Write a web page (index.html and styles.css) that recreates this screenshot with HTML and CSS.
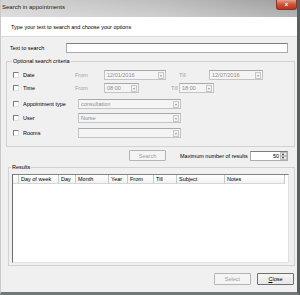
FILE: index.html
```html
<!doctype html>
<html>
<head>
<meta charset="utf-8">
<title>Search in appointments</title>
	<link rel="stylesheet" href="styles.css">
</head>

<body>
	<div class="window">
		<div class="titlebar">
			<span class="title">Search in appointments</span>
			<span class="close-x">x</span>
		</div>

		<div class="header">
			<span>Type your text to search and choose your options</span>
		</div>

		<div class="search-row">
			<span class="search-label">Text to search</span>
			<div class="field text-field"></div>
		</div>

		<fieldset class="criteria">
			<legend>Optional search criteria</legend>

			<div class="row row-date">
				<span class="check"></span>
				<span class="lbl">Date</span>
				<span class="muted from">From</span>
				<div class="field off combo w-date"><span>12/01/2016</span><i class="arrow"></i></div>
				<span class="muted till-date">Till</span>
				<div class="field off combo w-date2"><span>12/07/2016</span><i class="arrow"></i></div>
			</div>

			<div class="row row-time">
				<span class="check"></span>
				<span class="lbl">Time</span>
				<span class="muted from">From</span>
				<div class="field off combo w-time"><span>08:00</span><i class="arrow"></i></div>
				<span class="muted till-time">Till</span>
				<div class="field off combo w-time"><span>18:00</span><i class="arrow"></i></div>
			</div>

			<div class="row row-type">
				<span class="check"></span>
				<span class="lbl lbl-wide">Appointment type</span>
				<div class="field off combo w-combo"><span>consultation</span><i class="arrow"></i></div>
			</div>

			<div class="row row-user">
				<span class="check"></span>
				<span class="lbl lbl-wide">User</span>
				<div class="field off combo w-combo"><span>Nurse</span><i class="arrow"></i></div>
			</div>

			<div class="row row-rooms">
				<span class="check"></span>
				<span class="lbl lbl-wide">Rooms</span>
				<div class="field off combo w-combo"><span></span><i class="arrow"></i></div>
			</div>
		</fieldset>

		<div class="action-row">
			<div class="btn btn-off btn-search">Search</div>
			<span class="max-label">Maximum number of results</span>
			<div class="field spin"><span>50</span><span class="spin-btns"><i class="up"></i><i class="down"></i></span></div>
		</div>

		<fieldset class="results">
			<legend>Results</legend>
			<div class="list">
				<div class="list-head">
					<span class="col c0"></span>
					<span class="col c1">Day of week</span>
					<span class="col c2">Day</span>
					<span class="col c3">Month</span>
					<span class="col c4">Year</span>
					<span class="col c5">From</span>
					<span class="col c6">Till</span>
					<span class="col c7">Subject</span>
					<span class="col c8">Notes</span>
				</div>
			</div>
		</fieldset>

		<div class="bottom">
			<div class="btn btn-off">Select</div>
			<div class="btn"><u>C</u>lose</div>
		</div>
	</div>
</body>
</html>
```

FILE: styles.css
```css
*{padding: 0;margin: 0;box-sizing: border-box;}
body{font-family: "Liberation Sans", Arial, sans-serif;font-size: 5.5px;color: #000;background: #f0f0f0;}

.window{
	width: 300px;
	height: 295px;
	background-color: #f0f0f0;
	border-left: 1px solid #c9c9c9;
	border-right: 3px solid #56605f;
	border-bottom: 3px solid #6f7777;
	display: flex;
	flex-direction: column;}

/* title bar */
.titlebar{
	height: 17px;
	display: flex;
	justify-content: space-between;
	align-items: flex-start;
	background: linear-gradient(to bottom, rgba(255,255,255,0) 0%, rgba(255,255,255,0.25) 100%),
		linear-gradient(to right, #d3d3d3 0%, #bdbdbd 55%, #9c9c9c 100%);}
.title{font-size: 6px;line-height: 15px;padding-left: 1px;color: #1a1a1a;}
.close-x{
	width: 21px;
	height: 10px;
	margin-right: 0;
	background: linear-gradient(to bottom, #e7a08c 0%, #d0583e 45%, #b8341c 100%);
	border: 1px solid #8b3424;
	border-top: none;
	border-radius: 0 0 3px 3px;
	color: #fff;
	font-weight: bold;
	font-size: 6px;
	line-height: 8px;
	text-align: center;}

/* header */
.header{
	height: 20px;
	background-color: #fff;
	border-bottom: 1px solid #dadada;
	padding-left: 10px;
	display: flex;
	align-items: center;}

.search-row{
	display: flex;
	align-items: center;
	height: 10px;
	margin-top: 6px;
	padding-left: 9px;}
.search-label{width: 56px;}

/* fields */
.field{
	height: 10px;
	background-color: #fff;
	border: 1px solid #a8acb2;
	border-top-color: #7a7e84;
	display: flex;
	align-items: center;
	padding-left: 2px;}
.text-field{width: 222px;}
.field.off{background-color: #f4f4f4;border-color: #c4c4c4;border-top-color: #a9a9a9;color: #8e8e8e;}
.combo{justify-content: space-between;padding-right: 1px;}
.arrow{
	width: 6px;
	height: 7px;
	border: 1px solid #c8c8c8;
	background: #f2f2f2;
	position: relative;}
.arrow:after{
	content: "";
	position: absolute;
	left: 1px;
	top: 2px;
	border-left: 1.5px solid transparent;
	border-right: 1.5px solid transparent;
	border-top: 2px solid #9a9a9a;}

.muted{color: #a3a3a3;}

/* criteria group */
fieldset{border: 1px solid #d2d2d2;}
legend{line-height: 6px;padding: 0 1px;margin-left: -1px;}
.criteria{
	margin: 5px 2px 0 5px;
	padding: 6px 0 8px 6px;}

.row{display: flex;align-items: center;height: 10px;}
.row-time{margin-top: 3px;}
.row-type{margin-top: 6px;}
.row-user{margin-top: 4px;}
.row-rooms{margin-top: 5px;}

.check{
	width: 6px;
	height: 6px;
	background: #fff;
	border: 1px solid #e2e2e2;
	border-top-color: #7d7d7d;
	border-left-color: #7d7d7d;
	margin-right: 4px;}
.lbl{width: 52px;}
.lbl-wide{width: 55px;}
.from{width: 29px;}
.w-date{width: 62px;}
.w-date2{width: 54px;}
.till-date{width: 30px;margin-left: 13px;}
.w-time{width: 35px;}
.till-time{width: 8px;margin-left: 32px;}
.w-combo{width: 103px;}

/* search / max results */
.action-row{
	display: flex;
	align-items: center;
	height: 11px;
	margin-top: 3px;
	padding-left: 128px;}
.btn{
	width: 37px;
	height: 12px;
	display: flex;
	align-items: center;
	justify-content: center;
	background: linear-gradient(to bottom, #f6f6f6, #e6e6e6);
	border: 1px solid #707070;
	border-radius: 1px;}
.btn-off{color: #a0a0a0;border-color: #b5b5b5;background: #f4f4f4;}
.btn-search{height: 11px;}
.max-label{width: 70px;margin-left: 14px;}
.spin{width: 38px;justify-content: flex-end;padding-right: 0;}
.spin-btns{
	display: flex;
	flex-direction: column;
	width: 7px;
	height: 8px;
	margin-left: 1px;}
.spin-btns i{
	flex: 1;
	border: 1px solid #bdbdbd;
	background: #ececec;
	position: relative;}
.spin-btns i:after{
	content: "";
	position: absolute;
	left: 1px;
	top: 0;
	border-left: 1.5px solid transparent;
	border-right: 1.5px solid transparent;}
.spin-btns .up:after{border-bottom: 2px solid #222;}
.spin-btns .down:after{border-top: 2px solid #222;}

/* results group */
.results{
	margin: 3px 2px 0 7px;
	padding: 4px 0 2px 3px;}
.list{
	width: 277px;
	height: 89px;
	background: #fff;
	border: 1px solid #e0e0e0;
	border-left: 1px solid #6d6d6d;
	border-top-color: #828282;}
.list-head{display: flex;height: 9px;}
.col{
	height: 9px;
	line-height: 8px;
	padding-left: 2px;
	border-right: 1px solid #c8c8c8;
	border-bottom: 1px solid #d6d6d6;
	background: linear-gradient(to bottom, #fff, #f2f2f2);}
.c0{width: 6px;}
.c1{width: 40px;}
.c2{width: 17px;}
.c3{width: 33px;}
.c4{width: 19px;}
.c5{width: 26px;}
.c6{width: 23px;}
.c7{width: 48px;}
.c8{width: 60px;}

.bottom{
	display: flex;
	justify-content: flex-end;
	gap: 6px;
	margin-top: 7px;
	padding-right: 3px;}
```
